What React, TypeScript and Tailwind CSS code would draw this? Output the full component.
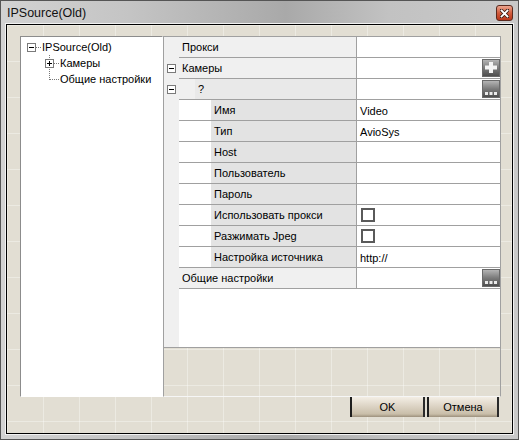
import React from "react";

type Row = {
  name: string;
  level: 0 | 1 | 2;
  value?: string;
  expander?: boolean;
  kind?: "plus" | "dots" | "check";
};

const rows: Row[] = [
  { name: "Прокси", level: 0 },
  { name: "Камеры", level: 0, expander: true, kind: "plus" },
  { name: "?", level: 1, expander: true, kind: "dots" },
  { name: "Имя", level: 2, value: "Video" },
  { name: "Тип", level: 2, value: "AvioSys" },
  { name: "Host", level: 2 },
  { name: "Пользователь", level: 2 },
  { name: "Пароль", level: 2 },
  { name: "Использовать прокси", level: 2, kind: "check" },
  { name: "Разжимать Jpeg", level: 2, kind: "check" },
  { name: "Настройка источника", level: 2, value: "http://" },
  { name: "Общие настройки", level: 0, kind: "dots" },
];

const MinusBox = () => (
  <svg width="9" height="9" viewBox="0 0 9 9">
    <rect x="0.5" y="0.5" width="8" height="8" fill="#fff" stroke="#7a7a7a" />
    <line x1="2" y1="4.5" x2="7" y2="4.5" stroke="#000" />
  </svg>
);

const EditButton = ({ kind }: { kind: "plus" | "dots" }) => (
  <div className="mt-[1px] h-[18px] w-[18px] shrink-0 border border-[#6a6a6a] bg-[linear-gradient(to_bottom,#b4b4b4,#7a7a7a_50%,#4e4e4e)]">
    {kind === "plus" ? (
      <svg width="16" height="16" viewBox="0 0 16 16">
        <rect x="6" y="2" width="4" height="11" fill="#f4f4f4" />
        <rect x="2" y="5.5" width="12" height="4" fill="#f4f4f4" />
      </svg>
    ) : (
      <svg width="16" height="16" viewBox="0 0 16 16">
        <rect x="2" y="11" width="3" height="3" fill="#eaeaea" />
        <rect x="6.5" y="11" width="3" height="3" fill="#eaeaea" />
        <rect x="11" y="11" width="3" height="3" fill="#eaeaea" />
      </svg>
    )}
  </div>
);

const PropertyRow = ({ row }: { row: Row }) => {
  const nameBg =
    row.level === 0 ? "bg-[#f0f0f0]" : row.level === 1 ? "bg-[#e9e9e9]" : "bg-[#e3e3e3]";
  return (
    <div className="flex h-[21px]">
      <div className="flex w-[15px] shrink-0 items-center justify-center bg-[#f0f0f0]">
        {row.expander && <MinusBox />}
      </div>
      <div className="flex flex-1 border-b border-[#a0a0a0]">
        {row.level === 1 && <div className="w-[16px] shrink-0 bg-[#f0f0f0]" />}
        {row.level === 2 && <div className="w-[32px] shrink-0 bg-white" />}
        <div className={`flex flex-1 items-center pl-[3px] ${nameBg}`}>{row.name}</div>
        <div className="flex w-[144px] shrink-0 items-start border-l border-[#a0a0a0] bg-white">
          {row.value && <span className="mt-[3px] pl-[3px]">{row.value}</span>}
          {row.kind === "check" && (
            <div className="mt-[3px] ml-[4px] h-[14px] w-[14px] border-2 border-[#5a5a5a] bg-white" />
          )}
          {(row.kind === "plus" || row.kind === "dots") && (
            <div className="ml-auto flex">
              <EditButton kind={row.kind} />
            </div>
          )}
        </div>
      </div>
    </div>
  );
};

const Tree = () => (
  <div className="h-full w-[143px] shrink-0 border-t border-l border-t-[#8c8c8c] border-l-[#8c8c8c] border-r border-b border-r-white border-b-white bg-white pt-[2px] text-[11px] text-black">
    <div className="flex h-[16px] items-center">
      <svg width="21" height="16" viewBox="0 0 21 16" className="shrink-0">
        <rect x="6.5" y="4.5" width="8" height="8" fill="#fff" stroke="#7a7a7a" />
        <line x1="8" y1="8.5" x2="13" y2="8.5" stroke="#000" />
        <line x1="15" y1="8.5" x2="21" y2="8.5" stroke="#777" strokeDasharray="1 1" />
      </svg>
      <span>IPSource(Old)</span>
    </div>
    <div className="flex h-[16px] items-center">
      <svg width="39" height="16" viewBox="0 0 39 16" className="shrink-0">
        <line x1="28.5" y1="0" x2="28.5" y2="16" stroke="#777" strokeDasharray="1 1" />
        <rect x="24.5" y="4.5" width="8" height="8" fill="#fff" stroke="#7a7a7a" />
        <line x1="26" y1="8.5" x2="31" y2="8.5" stroke="#000" />
        <line x1="28.5" y1="6" x2="28.5" y2="11" stroke="#000" />
        <line x1="33" y1="8.5" x2="39" y2="8.5" stroke="#777" strokeDasharray="1 1" />
      </svg>
      <span>Камеры</span>
    </div>
    <div className="flex h-[16px] items-center">
      <svg width="39" height="16" viewBox="0 0 39 16" className="shrink-0">
        <line x1="28.5" y1="0" x2="28.5" y2="9" stroke="#777" strokeDasharray="1 1" />
        <line x1="29" y1="8.5" x2="39" y2="8.5" stroke="#777" strokeDasharray="1 1" />
      </svg>
      <span>Общие настройки</span>
    </div>
  </div>
);

const DialogButton = ({ label, width }: { label: string; width: string }) => (
  <button
    className={`${width} h-[20px] border-l-2 border-r-2 border-l-[#1e1e1e] border-r-[#2a2a2a] bg-[linear-gradient(to_bottom,#f3eee5,#ddd4c5_45%,#c9bea9_85%,#9c907c)] text-[11px] text-black`}
  >
    {label}
  </button>
);

const App: React.FC = () => {
  return (
    <div className="flex h-[440px] w-[519px] flex-col border border-[#555] bg-[linear-gradient(to_right,#d2d2d2,#c4c4c4_25%,#a9a9a9_55%,#c2c2c2_75%,#c9c9c9)] px-[5px] pb-[5px] font-['Liberation_Sans',Arial,sans-serif]">
      <div className="flex h-[23px] shrink-0 items-start justify-between">
        <span className="mt-[3px] pl-[1px] text-[12.5px] text-[#111]">IPSource(Old)</span>
        <div className="mt-[4px] flex h-[16px] w-[17px] items-center justify-center rounded-[3px] border border-[#5b2a1e] bg-[linear-gradient(to_bottom,#eba58f,#d25c3d_50%,#b8361b)]">
          <svg width="9" height="9" viewBox="0 0 9 9">
            <path d="M1 1 L8 8 M8 1 L1 8" stroke="#3a1a12" strokeWidth="3.4" strokeLinecap="square" />
            <path d="M1.5 1.5 L7.5 7.5 M7.5 1.5 L1.5 7.5" stroke="#fff" strokeWidth="1.8" strokeLinecap="square" />
          </svg>
        </div>
      </div>
      <div className="flex flex-1 flex-col border border-black bg-[#e2ded3] bg-[linear-gradient(90deg,rgba(255,255,255,0.35)_1px,transparent_1px),linear-gradient(rgba(255,255,255,0.35)_1px,transparent_1px)] bg-[size:36px_36px] pt-[11px] pr-[11px] pl-[13px] shadow-[0_0_0_1px_#f2f2f2]">
        <div className="flex h-[361px] shrink-0 text-[11px] text-black">
          <Tree />
          <div className="flex h-full w-[338px] shrink-0 flex-col border-t border-l border-r border-b border-t-[#a0a0a0] border-l-[#a0a0a0] border-r-[#a0a0a0] border-b-[#f6f6f6]">
            {rows.map((r) => (
              <PropertyRow key={r.name} row={r} />
            ))}
            <div className="flex flex-1">
              <div className="w-[15px] bg-[#f0f0f0]" />
              <div className="flex-1 bg-white" />
            </div>
            <div className="h-[49px] shrink-0 border-t border-[#a0a0a0]" />
          </div>
        </div>
        <div className="flex justify-end gap-[2px] pr-[2px]">
          <DialogButton label="OK" width="w-[75px]" />
          <DialogButton label="Отмена" width="w-[72px]" />
        </div>
      </div>
    </div>
  );
};

export default App;
